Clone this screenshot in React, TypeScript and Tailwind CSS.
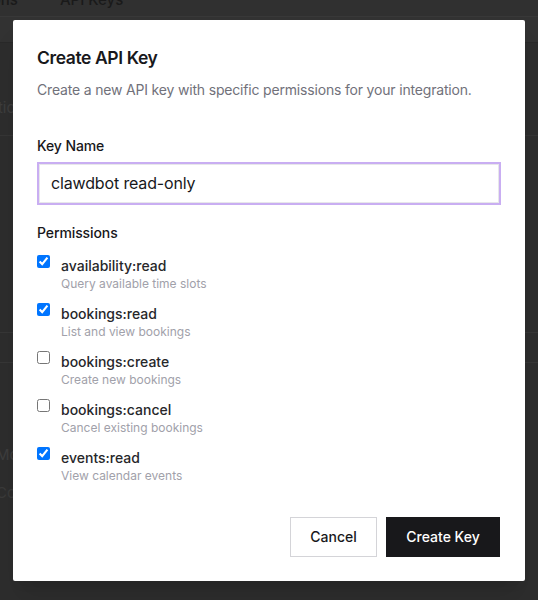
import React from "react";

const perms = [
  { name: "availability:read", desc: "Query available time slots", on: true },
  { name: "bookings:read", desc: "List and view bookings", on: true },
  { name: "bookings:create", desc: "Create new bookings", on: false },
  { name: "bookings:cancel", desc: "Cancel existing bookings", on: false },
  { name: "events:read", desc: "View calendar events", on: true },
];

export default function App() {
  return (
    <div
      className="relative w-[538px] h-[600px] overflow-hidden bg-[#2d2d2d]"
      style={{ fontFamily: "Inter, 'Liberation Sans', sans-serif" }}
    >
      {/* dimmed page underneath */}
      <div className="h-[28px] bg-[#303030] border-b border-[#383838]">
        <div className="flex gap-[42px] text-[15px] font-medium text-[#1a1a1a] -mt-[11px] -ml-[12px]">
          <span>ions</span>
          <span>API Keys</span>
        </div>
      </div>
      <div className="h-[26px] bg-[#323232] border-b border-[#292929]" />
      <div className="h-[93px] border-b border-[#353535] flex items-end pb-[16px]">
        <span className="-ml-[21px] text-[15px] text-[#3d3d3d]">Actions</span>
      </div>
      <div className="h-[197px] border-b border-[#363636]" />
      <div className="h-[30px] border-b border-[#363636]" />
      <div className="h-[23px]" />
      <div className="pt-[58px] -ml-[4px] text-[15px] text-[#3d3d3d]">Mode</div>
      <div className="pt-[15px] -ml-[4px] text-[15px] text-[#3a3a3a]">Copy</div>

      {/* overlay */}
      <div className="absolute inset-0 flex items-center justify-center">
        <div className="w-[512px] h-[561px] bg-white rounded-[2px] shadow-xl px-6 pt-6 pb-6 flex flex-col">
          <h2 className="text-[17.5px] leading-[28px] font-semibold tracking-[-0.4px] text-[#18181b]">Create API Key</h2>
          <p className="mt-2 text-[14px] leading-5 tracking-[-0.18px] text-[#71717a]">
            Create a new API key with specific permissions for your integration.
          </p>

          <label className="mt-[36px] text-[14px] leading-5 font-medium tracking-[-0.1px] text-[#18181b]">Key Name</label>
          <div className="mt-[6px] h-[43px] border-2 border-[#c9aef2] flex items-center">
            <div className="h-full w-full border border-[#e7e7ea] flex items-center px-[11px] text-[16px] tracking-[-0.15px] text-[#18181b]">
              clawdbot read-only
            </div>
          </div>

          <div className="mt-[18px] text-[14px] leading-5 font-medium tracking-[-0.1px] text-[#18181b]">Permissions</div>
          <div className="mt-[13px] flex flex-col gap-3">
            {perms.map((p) => (
              <div key={p.name} className="flex items-start gap-[11px]">
                <input
                  type="checkbox"
                  defaultChecked={p.on}
                  className="m-0 mt-[-1px] w-[13px] h-[13px] shrink-0"
                />
                <div className="flex flex-col">
                  <span className="text-[14px] leading-5 font-medium text-[#27272a]">{p.name}</span>
                  <span className="text-[12px] leading-4 text-[#a1a1aa]">{p.desc}</span>
                </div>
              </div>
            ))}
          </div>

          <div className="mt-auto flex justify-end gap-[9px] pr-px">
            <button className="h-10 w-[87px] border border-[#d4d4d8] bg-white text-[14px] font-medium text-[#18181b]">
              Cancel
            </button>
            <button className="h-10 w-[114px] bg-[#18181b] text-[14px] font-medium text-white">
              Create Key
            </button>
          </div>
        </div>
      </div>
    </div>
  );
}
